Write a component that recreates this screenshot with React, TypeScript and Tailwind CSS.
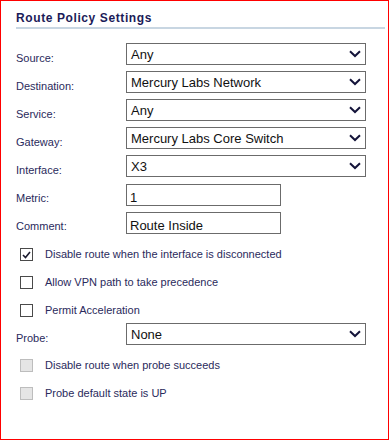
import { useState } from "react";

const labelFont = { fontFamily: '"Liberation Sans", Arial, sans-serif' };

const Chevron = () => (
  <svg width="12" height="8" viewBox="0 0 12 8" className="shrink-0">
    <polyline points="1,1.2 6,6 11,1.2" fill="none" stroke="#14143a" strokeWidth="2" />
  </svg>
);

const SelectBox = ({ value }: { value: string }) => (
  <div className="flex items-center justify-between w-[240px] h-[22px] border border-[#6b6b6b] bg-white pl-[4px] pr-[4px]">
    <span className="text-[13px] leading-[20px] pt-[1px] text-[#111]">{value}</span>
    <Chevron />
  </div>
);

const TextBox = ({ value }: { value: string }) => (
  <div className="w-[155px] h-[22px] border border-[#6b6b6b] bg-white pl-[3px]">
    <span className="text-[13px] leading-[20px] text-[#111]">{value}</span>
  </div>
);

const Row = ({ label, children, h = "h-[28px]", pt = "pt-[9px]" }: any) => (
  <div className={`flex items-start ${h}`}>
    <div className={`w-[110px] text-[11px] leading-[13px] text-[#2a2a5c] ${pt}`}>{label}</div>
    {children}
  </div>
);

const Check = ({ label, checked, disabled, h = "h-[28px]" }: any) => (
  <div className={`flex items-start ${h}`}>
    <div
      className={
        "ml-[4px] w-[13px] h-[13px] border flex items-center justify-center " +
        (disabled ? "bg-[#e5e5e5] border-[#bdbdbd]" : "bg-white border-[#4a4a4a]")
      }
    >
      {checked && (
        <svg width="9" height="8" viewBox="0 0 9 8">
          <polyline points="1,4 3.5,6.5 8,1" fill="none" stroke="#1a1a2e" strokeWidth="1.6" />
        </svg>
      )}
    </div>
    <div className="ml-[12px] text-[11px] leading-[13px] text-[#2a2a5c]">{label}</div>
  </div>
);

const App = () => {
  const [form] = useState({
    source: "Any",
    destination: "Mercury Labs Network",
    service: "Any",
    gateway: "Mercury Labs Core Switch",
    iface: "X3",
    metric: "1",
    comment: "Route Inside",
    probe: "None",
  });

  return (
    <div
      className="w-[389px] h-[440px] border border-[#ff0000] bg-white pl-[15px] pr-[3px] pt-[10px]"
      style={labelFont}
    >
      <div className="border-b-2 border-[#c8d6e2] pb-[2px]">
        <h2 className="text-[12px] leading-[14px] font-bold text-[#1b1b58] tracking-[0.6px]">
          Route Policy Settings
        </h2>
      </div>

      <div className="mt-[14px]">
        <Row label="Source:"><SelectBox value={form.source} /></Row>
        <Row label="Destination:"><SelectBox value={form.destination} /></Row>
        <Row label="Service:"><SelectBox value={form.service} /></Row>
        <Row label="Gateway:"><SelectBox value={form.gateway} /></Row>
        <Row label="Interface:" h="h-[29px]"><SelectBox value={form.iface} /></Row>
        <Row label="Metric:" pt="pt-[8px]"><TextBox value={form.metric} /></Row>
        <Row label="Comment:" pt="pt-[8px]"><TextBox value={form.comment} /></Row>
      </div>

      <div className="mt-[8px]">
        <Check label="Disable route when the interface is disconnected" checked />
        <Check label="Allow VPN path to take precedence" />
        <Check label="Permit Acceleration" h="h-[19px]" />
        <Row label="Probe:" h="h-[36px]"><SelectBox value={form.probe} /></Row>
        <Check label="Disable route when probe succeeds" disabled />
        <Check label="Probe default state is UP" disabled />
      </div>
    </div>
  );
};

export default App;
